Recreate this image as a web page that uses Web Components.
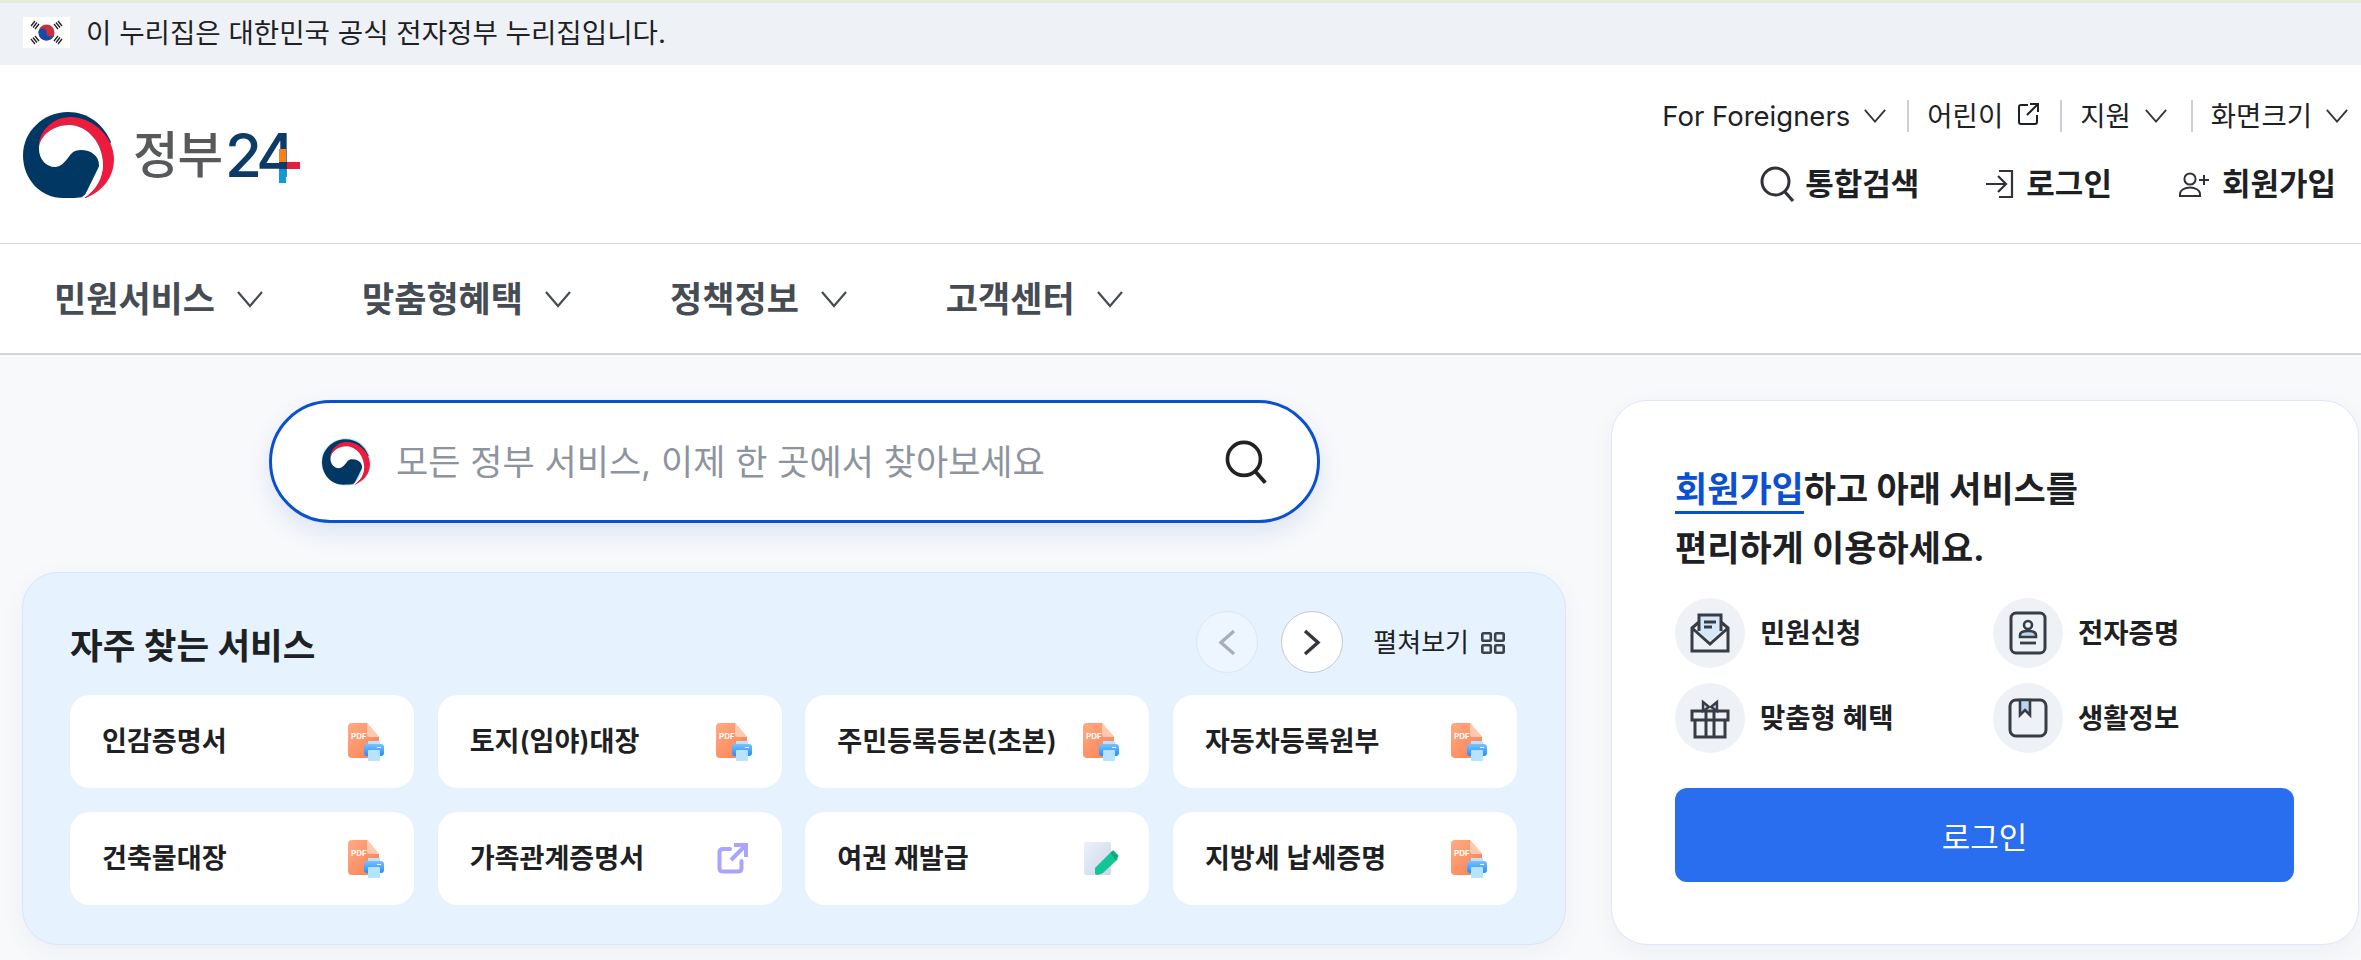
<!doctype html>
<html lang="ko">
<head>
<meta charset="utf-8">
<title>정부24</title>
<style>
    html, body {
        margin: 0;
        background: #f8f9fb;
    }
    body {
        width: 2361px;
        height: 960px;
        overflow: hidden;
        font-family: Inter, 'Noto Sans CJK KR', sans-serif;
        color: #1e2124;
    }
</style>
</head>
<body>
<gov-banner>이 누리집은 대한민국 공식 전자정부 누리집입니다.</gov-banner>
<gov-header></gov-header>
<gov-nav></gov-nav>
<gov-main>
    <search-box slot="left" placeholder="모든 정부 서비스, 이제 한 곳에서 찾아보세요"></search-box>
    <service-panel slot="left" heading="자주 찾는 서비스">
        <service-tile icon="pdf">인감증명서</service-tile>
        <service-tile icon="pdf">토지(임야)대장</service-tile>
        <service-tile icon="pdf">주민등록등본(초본)</service-tile>
        <service-tile icon="pdf">자동차등록원부</service-tile>
        <service-tile icon="pdf">건축물대장</service-tile>
        <service-tile icon="link">가족관계증명서</service-tile>
        <service-tile icon="edit">여권 재발급</service-tile>
        <service-tile icon="pdf">지방세 납세증명</service-tile>
    </service-panel>
    <login-card slot="right">
        <benefit-item icon="mail">민원신청</benefit-item>
        <benefit-item icon="id">전자증명</benefit-item>
        <benefit-item icon="gift">맞춤형 혜택</benefit-item>
        <benefit-item icon="book">생활정보</benefit-item>
    </login-card>
</gov-main>

<script>
const taegeuk = /*html*/ `
    <path fill="#003763" d="M45,0C20,0 0,20 0,43C0,68 18,86 40,86C48,86 55,86 61,85L88,30C80,12 65,0 45,0Z"/>
    <path fill="#ed1b3e" d="M16,37C14,20 30,5 47,5C70,5 91,25 91,47C91,65 80,79 63,86L61,86C73,78 80,66 80,52C80,32 65,13 46,13C30,13 16,24 16,37Z"/>
    <path fill="#fff" d="M16,37C16,24 30,13 46,13C65,13 80,32 80,52C80,66 73,78 61,86L59,85C70,78 76,65 76,53C76,44 68,38 58,38C50,38 48,42 45,46C41,51 37,55 32,55C23,55 16,47 16,37Z"/>
`

const icons = {
    chevron: [26, 16, `<path d="M1,1L13,15L25,1" fill="none" stroke="currentColor" stroke-width="2.2"/>`],
    out: [22, 24, `<path d="M11,3H4Q2,3 2,5V20Q2,22 4,22H18Q20,22 20,20V13M10,13L20,3M13,2H21V10" fill="none" stroke="currentColor" stroke-width="2"/>`],
    search: [36, 36, `<circle cx="15.5" cy="15.5" r="13.5" fill="none" stroke="currentColor" stroke-width="3"/><path d="M25,26L33,35" stroke="currentColor" stroke-width="3.2"/>`],
    login: [29, 28, `<path d="M14,1H27V27H14M1,14H20M13,6L21,14L13,22" fill="none" stroke="currentColor" stroke-width="2.2"/>`],
    join: [32, 25, `<circle cx="12" cy="7" r="5.6" fill="none" stroke="currentColor" stroke-width="2"/><path d="M2,24V22C2,18 7,15.500 12,15.500S22,18 22,22V24ZM26,3V13M21,8H31" fill="none" stroke="currentColor" stroke-width="2"/>`],
    prev: [18, 27, `<path d="M16,2L3,13.500L16,25" fill="none" stroke="currentColor" stroke-width="3.400"/>`],
    next: [18, 27, `<path d="M2,2L15,13.500L2,25" fill="none" stroke="currentColor" stroke-width="3.400"/>`],
    grid: [24, 22, `<g fill="none" stroke="currentColor" stroke-width="2.600"><rect x="1.300" y="1.300" width="8.500" height="7.500" rx="1"/><rect x="14.200" y="1.300" width="8.500" height="7.500" rx="1"/><rect x="1.300" y="13.200" width="8.500" height="7.500" rx="1"/><rect x="14.200" y="13.200" width="8.500" height="7.500" rx="1"/></g>`],
    pdf: [36, 38, `
        <defs>
            <linearGradient id="o" x1="0" y1="0" x2="1" y2="1"><stop offset="0" stop-color="#ffab84"/><stop offset="1" stop-color="#fb7d4e"/></linearGradient>
            <linearGradient id="b" x1="0" y1="0" x2="0" y2="1"><stop offset="0" stop-color="#7cc0ff"/><stop offset="1" stop-color="#1f8fff"/></linearGradient>
        </defs>
        <path fill="url(#o)" d="M4,0H19L31,14V31Q31,35 27,35H4Q0,35 0,31V4Q0,0 4,0Z"/>
        <path fill="#ffc9b0" d="M19,0L31,14H22Q19,14 19,11Z"/>
        <text x="3" y="15.500" font-family="Inter, sans-serif" font-size="8" font-weight="700" fill="#fff">PDF</text>
        <rect x="20" y="18" width="12" height="6" fill="#b9e3ff"/>
        <rect x="16" y="21" width="20" height="12" rx="3" fill="url(#b)"/>
        <rect x="20" y="27" width="12" height="11" rx="1" fill="#b4e4ff"/>
        <rect x="29" y="24" width="4" height="1" fill="#fff"/>`],
    link: [30, 31, `<path d="M13,6H6Q2.500,6 2.500,9.500V25Q2.500,28.500 6,28.500H21Q24.500,28.500 24.500,25V18" fill="none" stroke="#a9a4ff" stroke-width="4" stroke-linecap="round"/><path d="M14,17L27,4M17,2H29V14" fill="none" stroke="#a9a4ff" stroke-width="4"/>`],
    edit: [35, 34, `
        <defs>
            <linearGradient id="d" x1="0" y1="0" x2="1" y2="1"><stop offset="0" stop-color="#edf1fa"/><stop offset="1" stop-color="#cbd6e8"/></linearGradient>
        </defs>
        <rect width="27" height="33" rx="2" fill="url(#d)"/>
        <path fill="#12c795" d="M11,26L26,11L34,17L19,31Q11,35 11,31Z"/>
        <path fill="#0dab7f" d="M26,11L28,9Q29,8 30,9L34,13Q35,14 34,15L32,18.500Z"/>`],
    mail: [40, 40, `
        <path fill="#d5e8fa" d="M9,2H31V18L20,28L9,18Z"/>
        <path d="M9,18V2H31V18M9,9L2,15V38H38V15L31,9M2,15L20,31L38,15M14,9H26M14,14H22" fill="none" stroke="#383d45" stroke-width="3"/>`],
    id: [40, 44, `
        <rect x="3" y="2" width="34" height="40" rx="5" fill="none" stroke="#383d45" stroke-width="3"/>
        <circle cx="20" cy="14" r="4" fill="none" stroke="#383d45" stroke-width="2.600"/>
        <path d="M12,26V24C12,21 16,20 20,20S28,21 28,24V26Z" fill="#bcd5ef" stroke="#383d45" stroke-width="2.600"/>
        <path d="M12,32H28" stroke="#383d45" stroke-width="2.800"/>`],
    gift: [40, 40, `
        <path d="M13,4L19,9L13,13ZM27,4L21,9L27,13Z" fill="#bcd5ef" stroke="#383d45" stroke-width="2.400"/>
        <path d="M2,13H38V22H2ZM5,22V39H35V22M16,13V39M24,13V39" fill="none" stroke="#383d45" stroke-width="3"/>`],
    book: [40, 40, `
        <rect x="2" y="2" width="36" height="36" rx="6" fill="none" stroke="#383d45" stroke-width="3"/>
        <path d="M12,2V17L17,12L22,17V2Z" fill="#bcd5ef" stroke="#383d45" stroke-width="2.600"/>`]
}

class GovIcon extends HTMLElement {
    constructor() {
        super()
        this.shadow = this.attachShadow({ mode: 'open' })
        this.render()
    }

    render() {
        const [w, h, body] = icons[this.getAttribute('name')]
        const scale = this.getAttribute('size') ? this.getAttribute('size') / w : 1

        this.shadow.innerHTML = /*html*/ `
            <style>
                :host {
                    display: inline-flex;
                    flex: none;
                }
                svg {
                    display: block;
                    overflow: visible;
                }
            </style>
            <svg width='${w * scale}' height='${h * scale}' viewBox='0 0 ${w} ${h}'>${body}</svg>
        `
    }
}

class GovBanner extends HTMLElement {
    constructor() {
        super()
        this.shadow = this.attachShadow({ mode: 'open' })
        this.shadow.innerHTML = /*html*/ `
            <style>
                :host {
                    display: flex;
                    align-items: center;
                    gap: 16px;
                    box-sizing: border-box;
                    height: 65px;
                    padding: 0 0 3px 23px;
                    border-top: 3px solid #e7ebdc;
                    background: #eef2f7;
                    font-size: 27.600px;
                    line-height: 32px;
                    color: #1e2124;
                }
                svg {
                    display: block;
                    flex: none;
                }
            </style>
            <svg width='47' height='31' viewBox='0 0 47 31'>
                <rect width='47' height='31' fill='#fff'/>
                <circle cx='23.500' cy='15.500' r='8' fill='#cd2e3a'/>
                <path fill='#0f4ea8' d='M15.500,15.500A4,4 0 0 1 23.500,15.500A4,4 0 0 0 31.500,15.500A8,8 0 0 1 15.500,15.500Z'/>
                <path stroke='#222' stroke-width='1.300' d='M8,9L12,4M10,10.500L14,5.500M12,12L16,7M31,7L35,12M33,5.500L37,10.500M35,4L39,9M8,22L12,27M10,20.500L14,25.500M12,19L16,24M31,24L35,19M33,25.500L37,20.500M35,27L39,22'/>
            </svg>
            <slot></slot>
        `
    }
}

class GovHeader extends HTMLElement {
    constructor() {
        super()
        this.shadow = this.attachShadow({ mode: 'open' })
        this.shadow.innerHTML = /*html*/ `
            <style>
                :host {
                    display: flex;
                    justify-content: space-between;
                    box-sizing: border-box;
                    height: 179px;
                    padding: 0 13px 0 23px;
                    border-bottom: 1px solid #d6d8db;
                    background: #fff;
                }
                .logo {
                    position: relative;
                    display: flex;
                    align-items: center;
                    width: 280px;
                    height: 86px;
                    margin-top: 47px;
                }
                .logo svg {
                    flex: none;
                }
                .ko {
                    margin-left: 19px;
                    font-size: 49.500px;
                    font-weight: 500;
                    line-height: 60px;
                    letter-spacing: -1px;
                    color: #58595b;
                }
                .num {
                    margin-left: 3px;
                    font-size: 60px;
                    font-weight: 500;
                    line-height: 60px;
                    letter-spacing: -5px;
                    color: #0b3b66;
                }
                .plus {
                    position: absolute;
                    left: 256px;
                    top: 37px;
                    width: 21px;
                    height: 34px;
                }
                .plus i {
                    position: absolute;
                }
                .right {
                    display: flex;
                    flex-direction: column;
                    align-items: flex-end;
                    padding-top: 34px;
                }
                .util {
                    display: flex;
                    align-items: center;
                    height: 34px;
                    font-size: 27.500px;
                    color: #1e2124;
                }
                .util span {
                    display: flex;
                    align-items: center;
                    gap: 14px;
                    line-height: 34px;
                    white-space: nowrap;
                }
                .util b {
                    width: 2px;
                    height: 32px;
                    margin: 0 18px 0 21px;
                    background: #ccd0d6;
                }
                .util b:last-of-type {
                    margin-left: 24px;
                }
                .util gov-icon[name='chevron'] {
                    color: #33363d;
                }
                .util gov-icon[name='out'] {
                    margin-top: -5px;
                }
                .acts {
                    display: flex;
                    align-items: center;
                    height: 36px;
                    margin-top: 33px;
                    padding-right: 12px;
                    font-size: 31px;
                    font-weight: 700;
                    color: #1e2124;
                }
                .acts span {
                    display: flex;
                    align-items: center;
                    gap: 12px;
                    margin-left: 66px;
                    line-height: 36px;
                }
                .acts span:first-child {
                    gap: 9px;
                }
                .acts gov-icon {
                    color: #2f3237;
                }
            </style>
            <div class='logo'>
                <svg width='91' height='86' viewBox='0 0 91 86'>${taegeuk}</svg>
                <span class='ko'>정부</span><span class='num'>24</span>
                <div class='plus'>
                    <i style='left:0;top:0;width:7px;height:13px;background:#f58220'></i>
                    <i style='left:0;top:13px;width:8px;height:7px;background:#0b3b66'></i>
                    <i style='left:8px;top:13px;width:13px;height:7px;background:#ed1b3e'></i>
                    <i style='left:0;top:20px;width:7px;height:14px;background:#0e9bd8'></i>
                </div>
            </div>
            <div class='right'>
                <div class='util'>
                    <span>For Foreigners <gov-icon name='chevron' size='22'></gov-icon></span>
                    <b></b>
                    <span>어린이 <gov-icon name='out' size='22'></gov-icon></span>
                    <b></b>
                    <span>지원 <gov-icon name='chevron' size='22'></gov-icon></span>
                    <b></b>
                    <span>화면크기 <gov-icon name='chevron' size='22'></gov-icon></span>
                </div>
                <div class='acts'>
                    <span><gov-icon name='search'></gov-icon>통합검색</span>
                    <span><gov-icon name='login'></gov-icon>로그인</span>
                    <span><gov-icon name='join'></gov-icon>회원가입</span>
                </div>
            </div>
        `
    }
}

class GovNav extends HTMLElement {
    constructor() {
        super()
        this.shadow = this.attachShadow({ mode: 'open' })
        const items = ['민원서비스', '맞춤형혜택', '정책정보', '고객센터']

        this.shadow.innerHTML = /*html*/ `
            <style>
                :host {
                    display: flex;
                    align-items: center;
                    gap: 99px;
                    box-sizing: border-box;
                    height: 111px;
                    padding: 0 0 0 54px;
                    border-bottom: 2px solid #d2d5d9;
                    background: #fff;
                    font-size: 35px;
                    font-weight: 700;
                    color: #464c53;
                }
                span {
                    display: flex;
                    align-items: center;
                    gap: 22px;
                    line-height: 40px;
                }
            </style>
            ${items.map(t => `<span>${t}<gov-icon name='chevron'></gov-icon></span>`).join('')}
        `
    }
}

class GovMain extends HTMLElement {
    constructor() {
        super()
        this.shadow = this.attachShadow({ mode: 'open' })
        this.shadow.innerHTML = /*html*/ `
            <style>
                :host {
                    display: flex;
                    gap: 45px;
                    padding: 45px 0 0 22px;
                }
                .left {
                    display: flex;
                    flex-direction: column;
                    width: 1544px;
                }
            </style>
            <div class='left'><slot name='left'></slot></div>
            <slot name='right'></slot>
        `
    }
}

class SearchBox extends HTMLElement {
    constructor() {
        super()
        this.shadow = this.attachShadow({ mode: 'open' })
        this.shadow.innerHTML = /*html*/ `
            <style>
                :host {
                    display: flex;
                    align-items: center;
                    box-sizing: border-box;
                    width: 1051px;
                    height: 123px;
                    margin-left: 247px;
                    padding: 0 48px 0 49px;
                    border: 3px solid #0b50d0;
                    border-radius: 62px;
                    background: #fff;
                    box-shadow: 0 10px 24px rgba(60, 100, 200, .14);
                }
                svg {
                    flex: none;
                    margin-right: 25px;
                }
                span {
                    flex: 1;
                    font-size: 35px;
                    line-height: 44px;
                    color: #8d949e;
                }
                gov-icon {
                    color: #222;
                }
            </style>
            <svg width='50' height='50' viewBox='-2 -2 95 90'>
                <ellipse cx='45.500' cy='43' rx='47' ry='45' fill='#bfe4f5'/>
                ${taegeuk}
            </svg>
            <span>${this.getAttribute('placeholder')}</span>
            <gov-icon name='search' size='44'></gov-icon>
        `
    }
}

class ServicePanel extends HTMLElement {
    constructor() {
        super()
        this.shadow = this.attachShadow({ mode: 'open' })
        this.shadow.innerHTML = /*html*/ `
            <style>
                :host {
                    display: block;
                    box-sizing: border-box;
                    height: 373px;
                    margin-top: 49px;
                    padding: 38px 48px 0 47px;
                    border: 1px solid #d6e5fb;
                    border-radius: 36px;
                    background: #e6f3fe;
                    box-shadow: 0 8px 24px rgba(80, 90, 120, .06);
                }
                .head {
                    display: flex;
                    align-items: center;
                    height: 62px;
                }
                h2 {
                    flex: 1;
                    margin: 9px 0 0;
                    font-size: 35.500px;
                    font-weight: 700;
                    line-height: 44px;
                    color: #1e2124;
                }
                .round {
                    display: flex;
                    align-items: center;
                    justify-content: center;
                    box-sizing: border-box;
                    width: 62px;
                    height: 62px;
                    border-radius: 50%;
                    border: 1px solid #c8c8c8;
                    background: #fff;
                    color: #33363d;
                }
                .round.off {
                    margin-right: 23px;
                    border-color: #dbe6f0;
                    background: #edf6fe;
                    color: #a9afb6;
                }
                .more {
                    display: flex;
                    align-items: center;
                    gap: 12px;
                    margin: 2px 12px 0 30px;
                    font-size: 26px;
                    line-height: 32px;
                    color: #1e2124;
                }
                .more gov-icon {
                    color: #3d4148;
                }
                .grid {
                    display: grid;
                    grid-template-columns: repeat(4, 1fr);
                    grid-auto-rows: 93px;
                    gap: 24px 23.500px;
                    margin-top: 22px;
                }
            </style>
            <div class='head'>
                <h2>${this.getAttribute('heading')}</h2>
                <div class='round off'><gov-icon name='prev'></gov-icon></div>
                <div class='round'><gov-icon name='next'></gov-icon></div>
                <div class='more'>펼쳐보기<gov-icon name='grid'></gov-icon></div>
            </div>
            <div class='grid'><slot></slot></div>
        `
    }
}

class ServiceTile extends HTMLElement {
    constructor() {
        super()
        this.shadow = this.attachShadow({ mode: 'open' })
        this.shadow.innerHTML = /*html*/ `
            <style>
                :host {
                    display: flex;
                    align-items: center;
                    justify-content: space-between;
                    box-sizing: border-box;
                    padding: 0 30px 0 32px;
                    border-radius: 20px;
                    background: #fff;
                    font-size: 27.100px;
                    font-weight: 600;
                    line-height: 36px;
                    color: #1e2124;
                }
                gov-icon[name='link'] {
                    margin-right: 5px;
                }
            </style>
            <slot></slot>
            <gov-icon name='${this.getAttribute('icon')}'></gov-icon>
        `
    }
}

class LoginCard extends HTMLElement {
    constructor() {
        super()
        this.shadow = this.attachShadow({ mode: 'open' })
        this.shadow.innerHTML = /*html*/ `
            <style>
                :host {
                    display: block;
                    flex: none;
                    box-sizing: border-box;
                    width: 748px;
                    height: 545px;
                    padding: 59px 64px 0 63px;
                    border: 1px solid #dde6fa;
                    border-radius: 36px;
                    background: #fff;
                    box-shadow: 0 8px 24px rgba(80, 90, 120, .06);
                }
                h2 {
                    margin: 0;
                    font-size: 35px;
                    font-weight: 700;
                    line-height: 59px;
                    color: #1e2124;
                }
                em {
                    font-style: normal;
                    color: #0b50d0;
                    border-bottom: 3px solid #0b50d0;
                    padding-bottom: 1px;
                }
                .grid {
                    display: grid;
                    grid-template-columns: 318px 1fr;
                    grid-auto-rows: 70px;
                    row-gap: 15px;
                    margin-top: 20px;
                }
                button {
                    display: block;
                    width: 100%;
                    height: 94px;
                    margin-top: 35px;
                    border: 0;
                    border-radius: 12px;
                    background: #296eef;
                    font: inherit;
                    font-size: 31px;
                    color: #fff;
                }
            </style>
            <h2><em>회원가입</em>하고 아래 서비스를<br>편리하게 이용하세요.</h2>
            <div class='grid'><slot></slot></div>
            <button>로그인</button>
        `
    }
}

class BenefitItem extends HTMLElement {
    constructor() {
        super()
        this.shadow = this.attachShadow({ mode: 'open' })
        this.shadow.innerHTML = /*html*/ `
            <style>
                :host {
                    display: flex;
                    align-items: center;
                    gap: 15px;
                    font-size: 27.500px;
                    font-weight: 600;
                    line-height: 34px;
                    color: #1e2124;
                }
                .dot {
                    display: flex;
                    align-items: center;
                    justify-content: center;
                    width: 70px;
                    height: 70px;
                    border-radius: 50%;
                    background: #eef2f7;
                }
            </style>
            <div class='dot'><gov-icon name='${this.getAttribute('icon')}'></gov-icon></div>
            <slot></slot>
        `
    }
}

customElements.define('gov-icon', GovIcon)
customElements.define('gov-banner', GovBanner)
customElements.define('gov-header', GovHeader)
customElements.define('gov-nav', GovNav)
customElements.define('gov-main', GovMain)
customElements.define('search-box', SearchBox)
customElements.define('service-panel', ServicePanel)
customElements.define('service-tile', ServiceTile)
customElements.define('login-card', LoginCard)
customElements.define('benefit-item', BenefitItem)
</script>
</body>
</html>
